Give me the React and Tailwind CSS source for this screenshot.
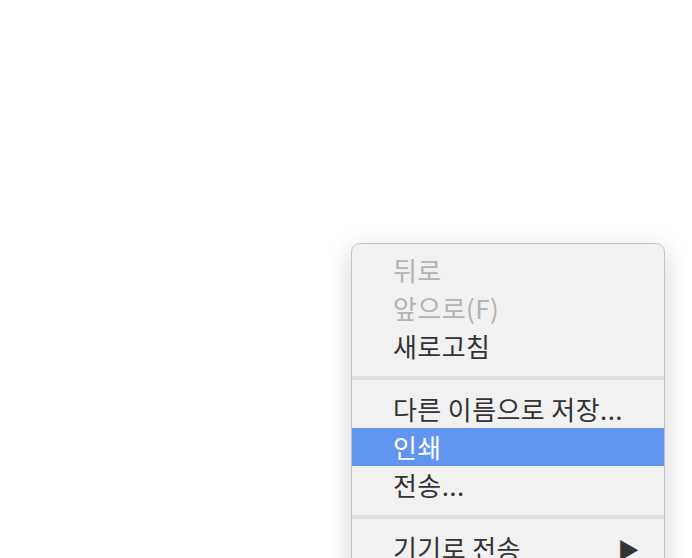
import React from 'react';

const font = "font-['Noto_Sans_CJK_KR','Noto_Sans',sans-serif]";

// one row of the context menu
const MenuItem = ({ label, disabled, active, submenu }) => (
  <div
    className={`flex items-center justify-between h-[38px] pl-[41px] pr-[24px] text-[26px] tracking-[0.4px] leading-none ${
      active ? 'bg-[#6195ef] text-white' : disabled ? 'text-[#b3b3b3]' : 'text-[#333333]'
    }`}
  >
    <span>{label}</span>
    {submenu && <span className="text-[22px] text-[#333333]">▶</span>}
  </div>
);

const Separator = () => (
  <div className="flex items-center h-[25px]">
    <div className="w-full h-[4px] bg-[#e0e0e0]" />
  </div>
);

export default function App() {
  return (
    <div className={`w-[692px] h-[558px] overflow-hidden bg-white pt-[243px] pl-[351px] ${font}`}>
      <div className="w-[314px] h-[400px] rounded-[9px] border border-[#c4c4c4] bg-[#f1f1f1] pt-[7px] shadow-[0_6px_22px_rgba(0,0,0,0.18)]">
        <MenuItem label="뒤로" disabled />
        <MenuItem label="앞으로(F)" disabled />
        <MenuItem label="새로고침" />
        <Separator />
        <MenuItem label="다른 이름으로 저장..." />
        <MenuItem label="인쇄" active />
        <MenuItem label="전송..." />
        <Separator />
        <MenuItem label="기기로 전송" submenu />
      </div>
    </div>
  );
}
